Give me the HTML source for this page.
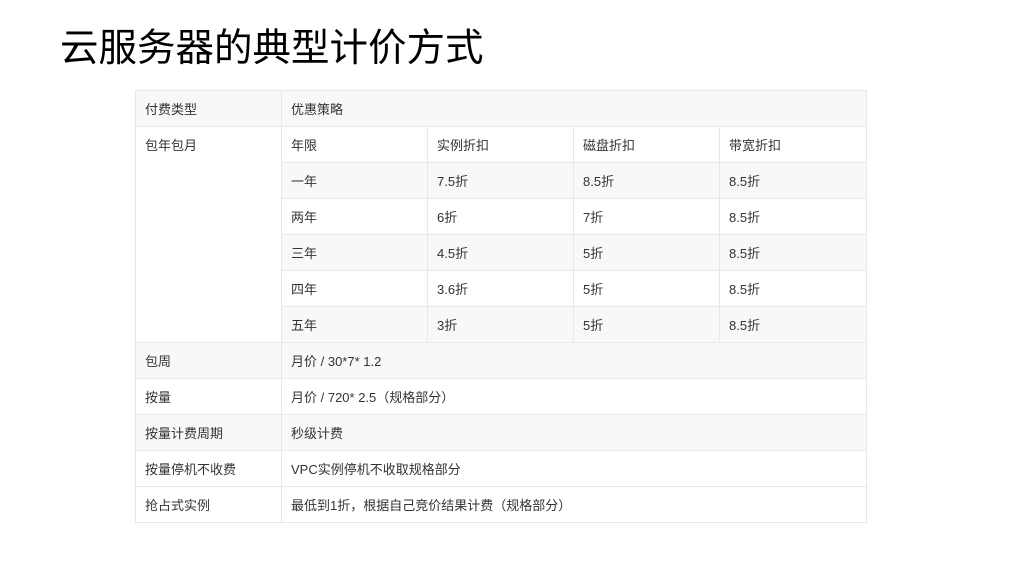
<!DOCTYPE html>
<html><head><meta charset="utf-8"><style>
body{margin:0;width:1024px;height:576px;background:#fff;position:relative;overflow:hidden;font-family:"Liberation Sans","Noto Sans CJK SC",sans-serif}
h1{position:absolute;left:60px;top:24px;margin:0;font-size:38.5px;font-weight:normal;color:#000;line-height:50px;font-family:"Liberation Sans","Noto Sans CJK SC",sans-serif}
.c{position:absolute;box-sizing:border-box;border:1px solid #e8e8e8;font-size:13px;color:#333;padding-left:9px;line-height:37px;height:37px}
.g{background:#f8f8f8}
</style></head><body>
<h1>云服务器的典型计价方式</h1>
<div id="t"></div>
<script>
var X=[135,281,427,573,719,866];
var h='';
function cell(x1,x2,y,hgt,txt,g){h+='<div class="c'+(g?' g':'')+'" style="left:'+x1+'px;width:'+(x2-x1+1)+'px;top:'+y+'px;height:'+(hgt+1)+'px">'+txt+'</div>';}
cell(135,281,90,36,'付费类型',1);cell(281,866,90,36,'优惠策略',1);
cell(135,281,126,216,'包年包月',0);
var sub=[['年限','实例折扣','磁盘折扣','带宽折扣'],['一年','7.5折','8.5折','8.5折'],['两年','6折','7折','8.5折'],['三年','4.5折','5折','8.5折'],['四年','3.6折','5折','8.5折'],['五年','3折','5折','8.5折']];
for(var i=0;i<6;i++)for(var j=0;j<4;j++)cell(X[j+1],X[j+2],126+36*i,36,sub[i][j],i%2==1);
var r=[['包周','月价 / 30*7* 1.2'],['按量','月价 / 720* 2.5（规格部分）'],['按量计费周期','秒级计费'],['按量停机不收费','VPC实例停机不收取规格部分'],['抢占式实例','最低到1折，根据自己竞价结果计费（规格部分）']];
for(var k=0;k<5;k++){var g=(k==0||k==2);cell(135,281,342+36*k,36,r[k][0],g);cell(281,866,342+36*k,36,r[k][1],g);}
document.getElementById('t').innerHTML=h;
</script>
</body></html>
